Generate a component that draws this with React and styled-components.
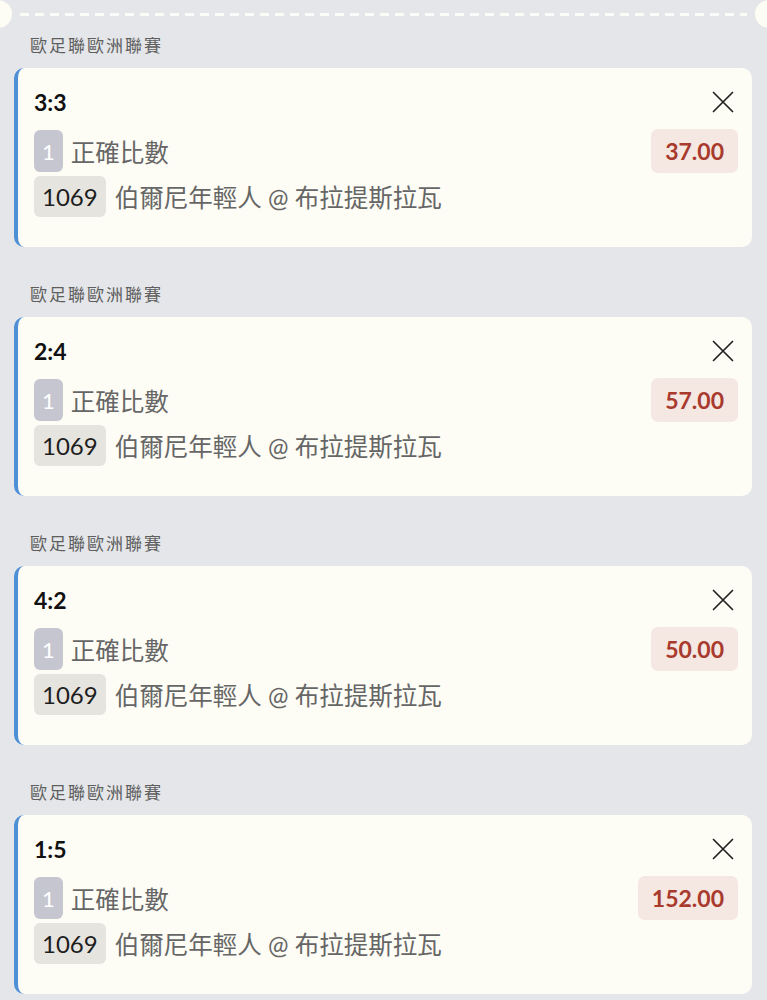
import React from 'react';
import styled, { createGlobalStyle } from 'styled-components';

const GlobalStyle = createGlobalStyle`
  html, body {
    margin: 0;
    padding: 0;
    background: #e4e6e9;
  }
  body {
    font-family: Lato, "Noto Sans CJK TC", sans-serif;
  }
`;

const Page = styled.div`
  width: 767px;
  min-height: 1000px;
  background: #e4e6e9;
  overflow: hidden;
`;

const TicketEdge = styled.div`
  position: relative;
  height: 28px;
  margin-bottom: 6px;

  &::before {
    content: '';
    position: absolute;
    left: 20px;
    right: 20px;
    top: 13px;
    height: 3px;
    background: repeating-linear-gradient(
      to right,
      #fbfbf8 0,
      #fbfbf8 9px,
      transparent 9px,
      transparent 15px
    );
  }
`;

const Notch = styled.span`
  position: absolute;
  top: 0;
  ${({ side }) => (side === 'left' ? 'left: -16px;' : 'right: -16px;')}
  width: 28px;
  height: 28px;
  border-radius: 50%;
  background: #fdfcf5;
`;

const Group = styled.section`
  padding: 0 15px 36px 14px;
`;

const League = styled.div`
  font-family: "Noto Sans CJK TC", sans-serif;
  font-size: 17px;
  letter-spacing: 2px;
  line-height: 22px;
  color: #5e5e5e;
  padding-left: 16px;
  margin-bottom: 12px;
`;

const Card = styled.div`
  background: #fdfcf5;
  border-radius: 10px;
  border-left: 4px solid #4f8fd6;
  padding: 20px 14px 30px 16px;
  display: flex;
  flex-direction: column;
`;

const TopRow = styled.div`
  display: flex;
  justify-content: space-between;
  align-items: center;
  height: 28px;
`;

const Score = styled.div`
  font-family: Lato, sans-serif;
  font-weight: 700;
  font-size: 23px;
  color: #111;
`;

const CloseButton = styled.button`
  border: none;
  background: none;
  padding: 0;
  width: 24px;
  height: 24px;
  display: flex;
  align-items: center;
  justify-content: center;
  color: #222;
  margin-right: 3px;
`;

const Row = styled.div`
  display: flex;
  align-items: center;
  justify-content: space-between;
  margin-top: ${({ gap }) => gap}px;
  height: ${({ h }) => h}px;
`;

const Left = styled.div`
  display: flex;
  align-items: center;
  gap: ${({ gap }) => gap}px;
`;

const Tag = styled.span`
  display: inline-flex;
  align-items: center;
  justify-content: center;
  box-sizing: border-box;
  height: ${({ h }) => h}px;
  padding: 0 ${({ pad }) => pad}px;
  border-radius: 6px;
  font-family: Lato, sans-serif;
  font-size: ${({ size }) => size}px;
  background: ${({ bg }) => bg};
  color: ${({ fg }) => fg};
`;

const Label = styled.span`
  font-family: Lato, "Noto Sans CJK TC", sans-serif;
  font-size: 24.5px;
  color: #666;
`;

const Odds = styled.span`
  display: inline-flex;
  align-items: center;
  height: 44px;
  padding: 0 14px;
  border-radius: 7px;
  background: #f5e7e1;
  color: #a83a2e;
  font-family: Lato, sans-serif;
  font-weight: 700;
  font-size: 23px;
`;

const bets = [
  { score: '3:3', odds: '37.00' },
  { score: '2:4', odds: '57.00' },
  { score: '4:2', odds: '50.00' },
  { score: '1:5', odds: '152.00' },
];

function CloseIcon() {
  return (
    <svg width="22" height="22" viewBox="0 0 22 22" fill="none" stroke="currentColor" strokeWidth="1.7" strokeLinecap="round">
      <path d="M1.5 1.5 L20.5 20.5 M20.5 1.5 L1.5 20.5" />
    </svg>
  );
}

export default function App() {
  return (
    <Page>
      <GlobalStyle />
      <TicketEdge>
        <Notch side="left" />
        <Notch side="right" />
      </TicketEdge>
      {bets.map((bet) => (
        <Group key={bet.score}>
          <League>歐足聯歐洲聯賽</League>
          <Card>
            <TopRow>
              <Score>{bet.score}</Score>
              <CloseButton aria-label="close">
                <CloseIcon />
              </CloseButton>
            </TopRow>
            <Row gap={14} h={42}>
              <Left gap={8}>
                <Tag h={42} pad={8} size={22} bg="#c6c6d0" fg="#fff">1</Tag>
                <Label>正確比數</Label>
              </Left>
              <Odds>{bet.odds}</Odds>
            </Row>
            <Row gap={4} h={41}>
              <Left gap={9}>
                <Tag h={41} pad={8} size={24} bg="#e6e4de" fg="#1e1e1e">1069</Tag>
                <Label>伯爾尼年輕人 @ 布拉提斯拉瓦</Label>
              </Left>
            </Row>
          </Card>
        </Group>
      ))}
    </Page>
  );
}
